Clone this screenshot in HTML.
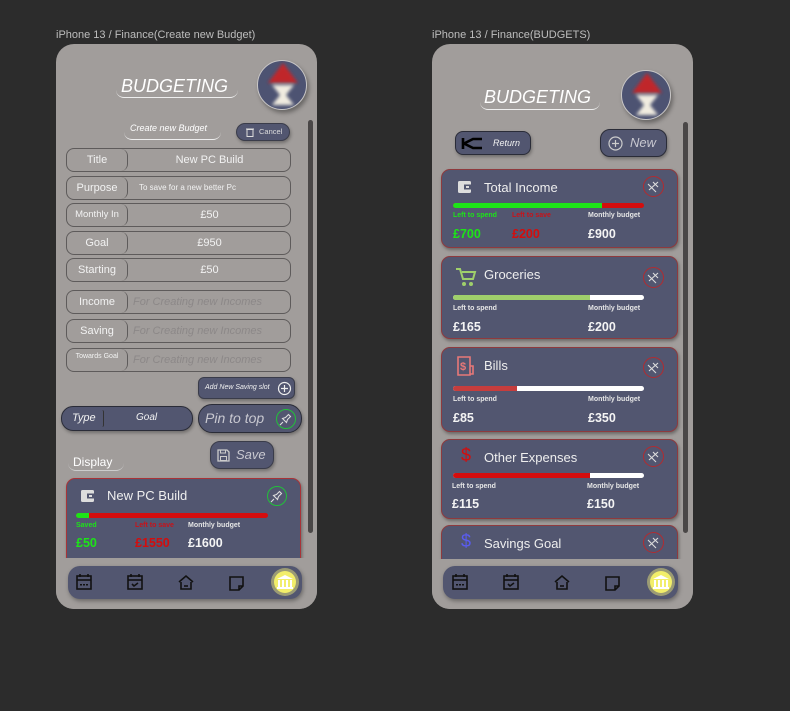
<!DOCTYPE html>
<html><head><meta charset="utf-8"><style>
*{margin:0;padding:0;box-sizing:border-box}
body{width:790px;height:711px;background:#2c2c2c;position:relative;overflow:hidden;font-family:"Liberation Sans",sans-serif;color:#f2f2f2}
.a{position:absolute}
.phone{position:absolute;top:44px;width:261px;height:565px;background:#a19d9b;border-radius:18px;overflow:hidden}
.title{position:absolute;font-size:18px;font-style:italic;color:#fff}
.uline{position:absolute;height:8px;border-bottom:1.5px solid #eee;border-radius:0 0 12px 12px}
.av{position:absolute;width:50px;height:50px;border-radius:50%;background:#4d5372;border:1.5px solid #c9c7c7;box-shadow:2px 3px 4px rgba(0,0,0,.35);overflow:hidden}
.sb{position:absolute;width:5px;background:#4a4747;border-radius:3px}
.f{position:absolute;left:10px;width:225px;height:24px;border:1px solid #5e5b5b;border-radius:8px;font-size:11px;color:#f2f2f2}
.f .l{position:absolute;left:0;top:0;height:22px;width:61px;border-right:1.5px solid #5e5b5b;border-radius:0 7px 7px 0;text-align:center;line-height:22px}
.f .v{position:absolute;left:62px;right:0;top:0;line-height:22px;text-align:center}
.f .p{position:absolute;left:66px;top:0;line-height:22px;font-style:italic;color:#8c8888;font-size:11px}
.btn{position:absolute;background:#525670;border:1px solid #3a3c4a;box-shadow:1px 2px 3px rgba(0,0,0,.3)}
.card{position:absolute;background:#525670;border:1px solid #8e3a3e;border-radius:9px;box-shadow:1px 2px 3px rgba(0,0,0,.35);width:237px}
.card .t{position:absolute;left:42px;top:10px;font-size:13px;color:#eee}
.bar{position:absolute;left:11px;width:191px;height:5px;border-radius:3px;background:#fff;overflow:hidden}
.bar i{position:absolute;left:0;top:0;bottom:0}
.sm{position:absolute;font-size:7px;font-weight:bold;color:#e6e6e6}
.big{position:absolute;font-size:12.5px;font-weight:bold;color:#f4f4f4}
.pin{position:absolute;right:13px;top:6px;width:21px;height:21px;border-radius:50%;border:1px solid #b22b30}
.nav{position:absolute;height:33px;background:#525670;border-radius:12px;box-shadow:1px 2px 4px rgba(0,0,0,.35)}
</style></head><body>
<div class="a" style="left:56px;top:29px;font-size:11px;color:#bdbdbd">iPhone 13 / Finance(Create new Budget)</div>
<div class="a" style="left:432px;top:29px;font-size:11px;color:#bdbdbd">iPhone 13 / Finance(BUDGETS)</div>

<!-- LEFT PHONE -->
<div class="phone" style="left:56px">
  <div class="title" style="left:65px;top:32px">BUDGETING</div>
  <div class="uline" style="left:60px;top:46px;width:122px"></div>
  <div class="av" style="left:201px;top:16px"><svg width="50" height="50"><defs><filter id="bl"><feGaussianBlur stdDeviation="1.5"/></filter></defs><g filter="url(#bl)"><polygon points="25,2 40,22 10,22" fill="#c0262c"/><polygon points="14,24 36,24 28,34 36,44 14,44 22,34" fill="#f1ece0"/></g></svg></div>
  <div class="a" style="left:74px;top:79px;font-size:9px;font-style:italic;color:#fff">Create new Budget</div>
  <div class="uline" style="left:68px;top:88px;width:97px;border-bottom-width:1px"></div>
  <div class="btn" style="left:180px;top:79px;width:54px;height:18px;border-radius:9px;font-size:7.5px;line-height:16px;padding-left:22px;color:#ddd">Cancel<svg class="a" style="left:9px;top:4px" width="8" height="9"><rect x="1" y="1.5" width="6" height="7" fill="none" stroke="#ddd"/><line x1="0" y1="1" x2="8" y2="1" stroke="#ddd"/></svg></div>
  <div class="sb" style="left:252px;top:76px;height:413px"></div>
  <div class="f" style="top:104px"><div class="l">Title</div><div class="v">New PC Build</div></div>
  <div class="f" style="top:132px"><div class="l">Purpose</div><div class="v" style="font-size:8px;text-align:left;padding-left:10px">To save for a new better Pc</div></div>
  <div class="f" style="top:159px"><div class="l" style="font-size:9.5px">Monthly In</div><div class="v">£50</div></div>
  <div class="f" style="top:187px"><div class="l">Goal</div><div class="v">£950</div></div>
  <div class="f" style="top:214px"><div class="l">Starting</div><div class="v">£50</div></div>
  <div class="f" style="top:246px"><div class="l">Income</div><div class="p">For Creating new Incomes</div></div>
  <div class="f" style="top:275px"><div class="l">Saving</div><div class="p">For Creating new Incomes</div></div>
  <div class="f" style="top:304px"><div class="l" style="font-size:7px;line-height:16px">Towards Goal</div><div class="p">For Creating new Incomes</div></div>
  <div class="btn" style="left:142px;top:333px;width:97px;height:22px;border-radius:6px;font-size:7px;font-style:italic;line-height:20px;padding-left:6px">Add New Saving slot<svg class="a" style="left:78px;top:3px" width="15" height="15"><circle cx="7.5" cy="7.5" r="6" fill="none" stroke="#eee" stroke-width="1.2"/><path d="M7.5 4v7M4 7.5h7" stroke="#eee" stroke-width="1.2"/></svg></div>
  <div class="btn" style="left:5px;top:362px;width:132px;height:25px;border-radius:12px;font-size:11px;font-style:italic;border-color:#2a2c38"><span class="a" style="left:10px;top:5px">Type</span><span class="a" style="left:40px;top:3px;width:2px;height:17px;border-right:1px solid #333;border-radius:0 4px 4px 0"></span><span class="a" style="left:74px;top:5px;font-size:10px">Goal</span></div>
  <div class="btn" style="left:142px;top:360px;width:104px;height:29px;border-radius:14px;font-size:14px;font-style:italic;color:#c8c8d0;border-color:#2a2c38"><span class="a" style="left:6px;top:5px">Pin to top</span><svg class="a" style="left:76px;top:3px" width="22" height="22"><circle cx="11" cy="11" r="9.5" fill="none" stroke="#22c03a" stroke-width="1"/><path d="M8 14l-3 3M7.5 10.5l4 4 1-3 3-3-2-2-3 3z" fill="none" stroke="#ddd" stroke-width="1.1"/></svg></div>
  <div class="btn" style="left:154px;top:397px;width:64px;height:28px;border-radius:10px;font-size:13px;font-style:italic;color:#c8c8d0"><span class="a" style="left:25px;top:5px">Save</span><svg class="a" style="left:6px;top:7px" width="13" height="13"><path d="M1 1h9l2 2v9H1z" fill="none" stroke="#ccc" stroke-width="1.3"/><rect x="3.5" y="1" width="5" height="3" fill="none" stroke="#ccc"/><rect x="3.5" y="7.5" width="6" height="4" fill="none" stroke="#ccc"/></svg></div>
  <div class="a" style="left:17px;top:411px;font-size:12px;color:#fff">Display</div>
  <div class="uline" style="left:12px;top:419px;width:56px;border-bottom-width:1px;border-color:#ccc"></div>
  <div class="card" style="left:10px;top:434px;height:100px;width:235px;border-color:#a83338">
    <svg class="a" style="left:14px;top:11px" width="14" height="12"><rect x="0" y="0" width="13" height="12" rx="1.5" fill="#ddd"/><rect x="6" y="3.5" width="7" height="5" fill="#525670"/><rect x="8" y="5" width="3" height="2" fill="#ddd"/></svg>
    <div class="t" style="top:9px;left:40px">New PC Build</div>
    <svg class="a" style="left:199px;top:6px" width="22" height="22"><circle cx="11" cy="11" r="9.5" fill="none" stroke="#22c03a"/><path d="M8 14l-3 3M7.5 10.5l4 4 1-3 3-3-2-2-3 3z" fill="none" stroke="#ddd" stroke-width="1.1"/></svg>
    <div class="bar" style="top:34px;width:192px;left:9px;background:#d40d0d"><i style="width:13px;background:#1de318"></i></div>
    <div class="sm" style="left:9px;top:43px;color:#1de318">Saved</div>
    <div class="sm" style="left:68px;top:43px;color:#c8121a">Left to save</div>
    <div class="sm" style="left:121px;top:43px">Monthly budget</div>
    <div class="big" style="left:9px;top:57px;color:#1de318">£50</div>
    <div class="big" style="left:68px;top:57px;color:#d40d0d">£1550</div>
    <div class="big" style="left:121px;top:57px">£1600</div>
    <div class="a" style="left:10px;top:79px;width:208px;border-top:1px solid #2a2c3a"></div>
  </div>
  <div class="a" style="left:0;top:514px;width:261px;height:51px;background:#a19d9b"></div>
  <div class="nav" style="left:12px;top:522px;width:234px"></div>
</div>

<!-- RIGHT PHONE -->
<div class="phone" style="left:432px">
  <div class="title" style="left:52px;top:43px">BUDGETING</div>
  <div class="uline" style="left:48px;top:58px;width:120px"></div>
  <div class="av" style="left:189px;top:26px"><svg width="50" height="50"><g filter="url(#bl)"><polygon points="25,2 40,22 10,22" fill="#c0262c"/><polygon points="14,24 36,24 28,34 36,44 14,44 22,34" fill="#f1ece0"/></g></svg></div>
  <div class="btn" style="left:23px;top:87px;width:76px;height:24px;border-radius:8px;border-color:#2a2c38;font-size:9px;font-style:italic"><svg class="a" style="left:5px;top:5px" width="24" height="13"><path d="M2 1v11M3 6.5L12 2h9M3 6.5L12 11h9" stroke="#000" stroke-width="2.6" fill="none"/></svg><span class="a" style="left:37px;top:6px">Return</span></div>
  <div class="btn" style="left:168px;top:85px;width:67px;height:28px;border-radius:10px;border-color:#2a2c38;font-size:13px;font-style:italic;color:#c8c8d0"><svg class="a" style="left:7px;top:6px" width="15" height="15"><circle cx="7.5" cy="7.5" r="6.5" fill="none" stroke="#ccc" stroke-width="1.2"/><path d="M7.5 4v7M4 7.5h7" stroke="#ccc" stroke-width="1.2"/></svg><span class="a" style="left:29px;top:5px">New</span></div>
  <div class="sb" style="left:251px;top:78px;height:411px"></div>

  <div class="card" style="left:9px;top:125px;height:79px">
    <svg class="a" style="left:16px;top:11px" width="14" height="12"><rect x="0" y="0" width="13" height="12" rx="1.5" fill="#ddd"/><rect x="6" y="3.5" width="7" height="5" fill="#525670"/><rect x="8" y="5" width="3" height="2" fill="#ddd"/></svg>
    <div class="t">Total Income</div>
    <div class="pin"><svg width="19" height="19"><path d="M5 13l9-8M6 9l4 4M9 5l5 5M4 7l8 8" stroke="#ddd" stroke-width="1.1"/></svg></div>
    <div class="bar" style="top:33px;background:#d40d0d"><i style="width:149px;background:#1de318"></i></div>
    <div class="sm" style="left:11px;top:42px;color:#1de318">Left to spend</div>
    <div class="sm" style="left:70px;top:42px;color:#c8121a">Left to save</div>
    <div class="sm" style="left:146px;top:42px">Monthly budget</div>
    <div class="big" style="left:11px;top:57px;color:#1de318">£700</div>
    <div class="big" style="left:70px;top:57px;color:#d40d0d">£200</div>
    <div class="big" style="left:146px;top:57px">£900</div>
  </div>
  <div class="card" style="left:9px;top:212px;height:83px">
    <svg class="a" style="left:13px;top:9px" width="22" height="22"><path d="M1 3h4l3 10h10l2-7H7" fill="none" stroke="#9fcf6b" stroke-width="2"/><circle cx="9" cy="18" r="2" fill="#9fcf6b"/><circle cx="16" cy="18" r="2" fill="#9fcf6b"/></svg>
    <div class="t">Groceries</div>
    <div class="pin" style="top:10px"><svg width="19" height="19"><path d="M5 13l9-8M6 9l4 4M9 5l5 5M4 7l8 8" stroke="#ddd" stroke-width="1.1"/></svg></div>
    <div class="bar" style="top:38px"><i style="width:137px;background:#9fcf6b"></i></div>
    <div class="sm" style="left:11px;top:48px">Left to spend</div>
    <div class="sm" style="left:146px;top:48px">Monthly budget</div>
    <div class="big" style="left:11px;top:63px">£165</div>
    <div class="big" style="left:146px;top:63px">£200</div>
  </div>
  <div class="card" style="left:9px;top:303px;height:85px">
    <svg class="a" style="left:14px;top:7px" width="20" height="22"><path d="M2 2h12v18H2zM14 11h3v8h-3" fill="none" stroke="#e87878" stroke-width="1.6"/><text x="4" y="15" font-size="11" font-weight="bold" fill="#e87878" font-family="Liberation Sans">$</text></svg>
    <div class="t">Bills</div>
    <div class="pin" style="top:9px"><svg width="19" height="19"><path d="M5 13l9-8M6 9l4 4M9 5l5 5M4 7l8 8" stroke="#ddd" stroke-width="1.1"/></svg></div>
    <div class="bar" style="top:38px"><i style="width:64px;background:#c63d3d"></i></div>
    <div class="sm" style="left:11px;top:48px">Left to spend</div>
    <div class="sm" style="left:146px;top:48px">Monthly budget</div>
    <div class="big" style="left:11px;top:63px">£85</div>
    <div class="big" style="left:146px;top:63px">£350</div>
  </div>
  <div class="card" style="left:9px;top:395px;height:80px">
    <div class="a" style="left:19px;top:5px;font-size:18px;color:#d40d0d">$</div>
    <div class="t">Other Expenses</div>
    <div class="pin"><svg width="19" height="19"><path d="M5 13l9-8M6 9l4 4M9 5l5 5M4 7l8 8" stroke="#ddd" stroke-width="1.1"/></svg></div>
    <div class="bar" style="top:33px"><i style="width:137px;background:#d40d0d"></i></div>
    <div class="sm" style="left:10px;top:43px">Left to spend</div>
    <div class="sm" style="left:145px;top:43px">Monthly budget</div>
    <div class="big" style="left:10px;top:57px">£115</div>
    <div class="big" style="left:145px;top:57px">£150</div>
  </div>
  <div class="card" style="left:9px;top:481px;height:60px">
    <div class="a" style="left:19px;top:5px;font-size:18px;color:#5a5cf0">$</div>
    <div class="t">Savings Goal</div>
    <div class="pin"><svg width="19" height="19"><path d="M5 13l9-8M6 9l4 4M9 5l5 5M4 7l8 8" stroke="#ddd" stroke-width="1.1"/></svg></div>
  </div>
  <div class="a" style="left:0;top:515px;width:261px;height:50px;background:#a19d9b"></div>
  <div class="nav" style="left:11px;top:522px;width:235px"></div>
</div>

<svg class="a" style="left:0;top:0" width="790" height="711">
<defs>
<g id="ico">
  <g fill="none" stroke="#111" stroke-width="1.6">
    <g transform="translate(2,0)"><rect x="9" y="-7" width="14" height="13"/><line x1="9" y1="-3" x2="23" y2="-3"/><line x1="12" y1="-9" x2="12" y2="-6"/><line x1="20" y1="-9" x2="20" y2="-6"/></g>
    <g transform="translate(3,0)"><rect x="59" y="-7" width="14" height="13"/><line x1="59" y1="-3" x2="73" y2="-3"/><line x1="62" y1="-9" x2="62" y2="-6"/><line x1="70" y1="-9" x2="70" y2="-6"/><path d="M63 1l2 2 4-3"/></g>
    <g transform="translate(10,0)"><path d="M103 -1l7-6 7 6M105 -1v7h10v-7"/><line x1="108" y1="3" x2="112" y2="3"/></g>
    <g transform="translate(11,0)"><path d="M153 -6h13v9l-4 4h-9z"/><path d="M166 3h-4v4"/></g>
  </g>
  <g fill="#111" transform="translate(2,0)"><rect x="12" y="1" width="2" height="1.5"/><rect x="15" y="1" width="2" height="1.5"/><rect x="18" y="1" width="2" height="1.5"/></g>
  <g transform="translate(16,0)">
  <circle cx="203" cy="-1" r="14" fill="#f5f07a" opacity=".45"/><circle cx="203" cy="-1" r="11" fill="#f2ee6a"/>
  <g fill="#fff"><polygon points="203,-8 211,-4 195,-4"/><rect x="196" y="-3" width="2" height="7"/><rect x="200" y="-3" width="2" height="7"/><rect x="204" y="-3" width="2" height="7"/><rect x="208" y="-3" width="2" height="7"/><rect x="195" y="4" width="16" height="2"/></g>
  </g>
</g>
</defs>
<use href="#ico" x="66" y="583"/>
<use href="#ico" x="442" y="583"/>
</svg>
</body></html>
